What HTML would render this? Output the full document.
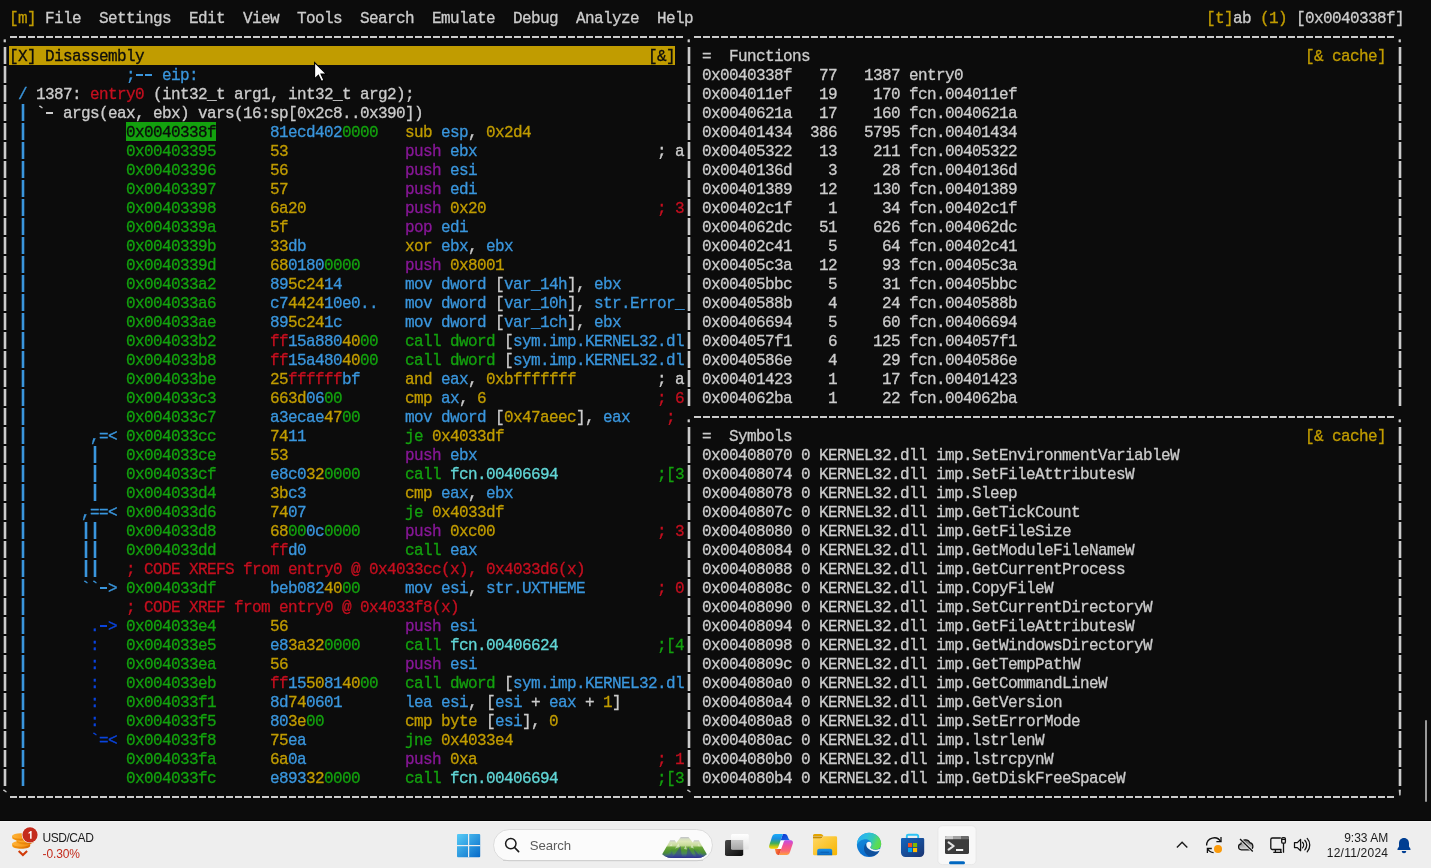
<!DOCTYPE html>
<html><head><meta charset="utf-8"><title>radare2</title>
<style>
html,body{margin:0;padding:0}
body{width:1431px;height:868px;overflow:hidden;background:#0C0C0C;position:relative;font-family:"Liberation Sans",sans-serif}
#term{will-change:transform;position:absolute;left:0;top:0;width:1431px;height:821px;background:#0C0C0C;overflow:hidden}
#term span{-webkit-text-stroke:0.3px;position:absolute;white-space:pre;font-family:"Liberation Mono",monospace;font-size:16px;letter-spacing:-0.6px;line-height:19px;height:19px;transform-origin:0 14px;transform:translateY(1.7px) scaleY(1.03)}
#term i{position:absolute;display:block}
#term i.bg{height:19px}
#term i.v{width:9px;background-image:linear-gradient(to bottom,transparent 1px,currentColor 1px,currentColor 18px,transparent 18px);background-size:2px 19px;background-position:4px 0;background-repeat:repeat-y}
#term i.v::before{content:"";position:absolute;left:3px;top:0;width:4px;height:100%;opacity:.3;background-image:linear-gradient(to bottom,transparent 1px,currentColor 1px,currentColor 18px,transparent 18px);background-size:4px 19px;background-repeat:repeat-y}
#term i.h{height:19px;background-image:linear-gradient(to right,transparent 1.2px,currentColor 1.2px,currentColor 7.9px,transparent 7.9px);background-size:9px 2px;background-position:0 9px;background-repeat:repeat-x}
.cw{color:#CCCCCC}
.cy{color:#C19C00}
.cb{color:#3A96DD}
.cB{color:#0A44DE}
.cg{color:#13A10E}
.cr{color:#C50F1F}
.cm{color:#881798}
.cc{color:#61D6D6}
.ck{color:#0C0C0C}
#bar{position:absolute;left:0;top:821px;width:1431px;height:47px;background:#EEEEEE;border-top:1px solid #F4F4F4;box-sizing:border-box}
.tx{position:absolute;font-family:"Liberation Sans",sans-serif;font-size:12px;line-height:16px;white-space:nowrap}
#tbw{position:absolute;left:0;top:0;width:1431px;height:868px;will-change:transform}
</style></head><body>
<div id="term">
<i class="bg" style="left:9px;top:46px;width:666px;background:#C19C00"></i>
<i class="bg" style="left:126px;top:122px;width:90px;background:#13A10E"></i>
<i class="v" style="left:0px;top:46px;height:741px;color:#CCCCCC"></i>
<i class="v" style="left:18px;top:103px;height:684px;color:#3A96DD"></i>
<i class="v" style="left:81px;top:521px;height:57px;color:#3A96DD"></i>
<i class="v" style="left:90px;top:445px;height:57px;color:#3A96DD"></i>
<i class="v" style="left:90px;top:521px;height:57px;color:#3A96DD"></i>
<i class="v" style="left:684px;top:46px;height:361px;color:#CCCCCC"></i>
<i class="v" style="left:684px;top:426px;height:361px;color:#CCCCCC"></i>
<i class="v" style="left:1395px;top:46px;height:361px;color:#CCCCCC"></i>
<i class="v" style="left:1395px;top:426px;height:361px;color:#CCCCCC"></i>
<i class="h" style="left:9px;top:27px;width:675px;color:#CCCCCC"></i>
<i class="h" style="left:693px;top:27px;width:702px;color:#CCCCCC"></i>
<i class="h" style="left:135px;top:65px;width:18px;color:#3A96DD"></i>
<i class="h" style="left:45px;top:103px;width:9px;color:#CCCCCC"></i>
<i class="h" style="left:693px;top:407px;width:702px;color:#CCCCCC"></i>
<i class="h" style="left:99px;top:578px;width:9px;color:#3A96DD"></i>
<i class="h" style="left:99px;top:616px;width:9px;color:#0A44DE"></i>
<i class="h" style="left:9px;top:787px;width:675px;color:#CCCCCC"></i>
<i class="h" style="left:693px;top:787px;width:702px;color:#CCCCCC"></i>
<span class="cy" style="left:9px;top:8px">[m]</span>
<span class="cw" style="left:45px;top:8px">File  Settings  Edit  View  Tools  Search  Emulate  Debug  Analyze  Help</span>
<span class="cy" style="left:1206px;top:8px">[t]</span>
<span class="cw" style="left:1233px;top:8px">ab</span>
<span class="cy" style="left:1260px;top:8px">(1)</span>
<span class="cw" style="left:1296px;top:8px">[0x0040338f]</span>
<span class="cw" style="left:0px;top:27px">.</span>
<span class="cw" style="left:684px;top:27px">.</span>
<span class="cw" style="left:1395px;top:27px">.</span>
<span class="ck" style="left:9px;top:46px">[X] Disassembly</span>
<span class="ck" style="left:648px;top:46px">[&amp;]</span>
<span class="cw" style="left:702px;top:46px">=  Functions</span>
<span class="cy" style="left:1305px;top:46px">[&amp; cache]</span>
<span class="cb" style="left:126px;top:65px">;</span>
<span class="cb" style="left:162px;top:65px">eip:</span>
<span class="cw" style="left:702px;top:65px">0x0040338f</span>
<span class="cw" style="left:819px;top:65px">77</span>
<span class="cw" style="left:864px;top:65px">1387 entry0</span>
<span class="cb" style="left:18px;top:84px">/</span>
<span class="cw" style="left:36px;top:84px">1387:</span>
<span class="cr" style="left:90px;top:84px">entry0</span>
<span class="cw" style="left:153px;top:84px">(int32_t arg1, int32_t arg2);</span>
<span class="cw" style="left:702px;top:84px">0x004011ef</span>
<span class="cw" style="left:819px;top:84px">19</span>
<span class="cw" style="left:873px;top:84px">170 fcn.004011ef</span>
<span class="cw" style="left:36px;top:103px">`  args(eax, ebx) vars(16:sp[0x2c8..0x390])</span>
<span class="cw" style="left:702px;top:103px">0x0040621a</span>
<span class="cw" style="left:819px;top:103px">17</span>
<span class="cw" style="left:873px;top:103px">160 fcn.0040621a</span>
<span class="ck" style="left:126px;top:122px">0x0040338f</span>
<span class="cb" style="left:270px;top:122px">81ecd402</span>
<span class="cg" style="left:342px;top:122px">0000</span>
<span class="cy" style="left:405px;top:122px">sub</span>
<span class="cb" style="left:441px;top:122px">esp</span>
<span class="cw" style="left:468px;top:122px">,</span>
<span class="cy" style="left:486px;top:122px">0x2d4</span>
<span class="cw" style="left:702px;top:122px">0x00401434  386</span>
<span class="cw" style="left:864px;top:122px">5795 fcn.00401434</span>
<span class="cg" style="left:126px;top:141px">0x00403395</span>
<span class="cy" style="left:270px;top:141px">53</span>
<span class="cm" style="left:405px;top:141px">push</span>
<span class="cb" style="left:450px;top:141px">ebx</span>
<span class="cw" style="left:657px;top:141px">; a  0x00405322</span>
<span class="cw" style="left:819px;top:141px">13</span>
<span class="cw" style="left:873px;top:141px">211 fcn.00405322</span>
<span class="cg" style="left:126px;top:160px">0x00403396</span>
<span class="cy" style="left:270px;top:160px">56</span>
<span class="cm" style="left:405px;top:160px">push</span>
<span class="cb" style="left:450px;top:160px">esi</span>
<span class="cw" style="left:702px;top:160px">0x0040136d</span>
<span class="cw" style="left:828px;top:160px">3</span>
<span class="cw" style="left:882px;top:160px">28 fcn.0040136d</span>
<span class="cg" style="left:126px;top:179px">0x00403397</span>
<span class="cy" style="left:270px;top:179px">57</span>
<span class="cm" style="left:405px;top:179px">push</span>
<span class="cb" style="left:450px;top:179px">edi</span>
<span class="cw" style="left:702px;top:179px">0x00401389</span>
<span class="cw" style="left:819px;top:179px">12</span>
<span class="cw" style="left:873px;top:179px">130 fcn.00401389</span>
<span class="cg" style="left:126px;top:198px">0x00403398</span>
<span class="cy" style="left:270px;top:198px">6a20</span>
<span class="cm" style="left:405px;top:198px">push</span>
<span class="cy" style="left:450px;top:198px">0x20</span>
<span class="cr" style="left:657px;top:198px">; 3</span>
<span class="cw" style="left:702px;top:198px">0x00402c1f</span>
<span class="cw" style="left:828px;top:198px">1</span>
<span class="cw" style="left:882px;top:198px">34 fcn.00402c1f</span>
<span class="cg" style="left:126px;top:217px">0x0040339a</span>
<span class="cy" style="left:270px;top:217px">5f</span>
<span class="cm" style="left:405px;top:217px">pop</span>
<span class="cb" style="left:441px;top:217px">edi</span>
<span class="cw" style="left:702px;top:217px">0x004062dc</span>
<span class="cw" style="left:819px;top:217px">51</span>
<span class="cw" style="left:873px;top:217px">626 fcn.004062dc</span>
<span class="cg" style="left:126px;top:236px">0x0040339b</span>
<span class="cy" style="left:270px;top:236px">33</span>
<span class="cb" style="left:288px;top:236px">db</span>
<span class="cy" style="left:405px;top:236px">xor</span>
<span class="cb" style="left:441px;top:236px">ebx</span>
<span class="cw" style="left:468px;top:236px">,</span>
<span class="cb" style="left:486px;top:236px">ebx</span>
<span class="cw" style="left:702px;top:236px">0x00402c41</span>
<span class="cw" style="left:828px;top:236px">5</span>
<span class="cw" style="left:882px;top:236px">64 fcn.00402c41</span>
<span class="cg" style="left:126px;top:255px">0x0040339d</span>
<span class="cy" style="left:270px;top:255px">68</span>
<span class="cb" style="left:288px;top:255px">0180</span>
<span class="cg" style="left:324px;top:255px">0000</span>
<span class="cm" style="left:405px;top:255px">push</span>
<span class="cy" style="left:450px;top:255px">0x8001</span>
<span class="cw" style="left:702px;top:255px">0x00405c3a</span>
<span class="cw" style="left:819px;top:255px">12</span>
<span class="cw" style="left:882px;top:255px">93 fcn.00405c3a</span>
<span class="cg" style="left:126px;top:274px">0x004033a2</span>
<span class="cb" style="left:270px;top:274px">89</span>
<span class="cy" style="left:288px;top:274px">5c24</span>
<span class="cb" style="left:324px;top:274px">14</span>
<span class="cb" style="left:405px;top:274px">mov dword</span>
<span class="cw" style="left:495px;top:274px">[</span>
<span class="cb" style="left:504px;top:274px">var_14h</span>
<span class="cw" style="left:567px;top:274px">],</span>
<span class="cb" style="left:594px;top:274px">ebx</span>
<span class="cw" style="left:702px;top:274px">0x00405bbc</span>
<span class="cw" style="left:828px;top:274px">5</span>
<span class="cw" style="left:882px;top:274px">31 fcn.00405bbc</span>
<span class="cg" style="left:126px;top:293px">0x004033a6</span>
<span class="cb" style="left:270px;top:293px">c7</span>
<span class="cy" style="left:288px;top:293px">4424</span>
<span class="cb" style="left:324px;top:293px">10e0..</span>
<span class="cb" style="left:405px;top:293px">mov dword</span>
<span class="cw" style="left:495px;top:293px">[</span>
<span class="cb" style="left:504px;top:293px">var_10h</span>
<span class="cw" style="left:567px;top:293px">],</span>
<span class="cb" style="left:594px;top:293px">str.Error_</span>
<span class="cw" style="left:702px;top:293px">0x0040588b</span>
<span class="cw" style="left:828px;top:293px">4</span>
<span class="cw" style="left:882px;top:293px">24 fcn.0040588b</span>
<span class="cg" style="left:126px;top:312px">0x004033ae</span>
<span class="cb" style="left:270px;top:312px">89</span>
<span class="cy" style="left:288px;top:312px">5c24</span>
<span class="cb" style="left:324px;top:312px">1c</span>
<span class="cb" style="left:405px;top:312px">mov dword</span>
<span class="cw" style="left:495px;top:312px">[</span>
<span class="cb" style="left:504px;top:312px">var_1ch</span>
<span class="cw" style="left:567px;top:312px">],</span>
<span class="cb" style="left:594px;top:312px">ebx</span>
<span class="cw" style="left:702px;top:312px">0x00406694</span>
<span class="cw" style="left:828px;top:312px">5</span>
<span class="cw" style="left:882px;top:312px">60 fcn.00406694</span>
<span class="cg" style="left:126px;top:331px">0x004033b2</span>
<span class="cr" style="left:270px;top:331px">ff</span>
<span class="cb" style="left:288px;top:331px">15a880</span>
<span class="cy" style="left:342px;top:331px">40</span>
<span class="cg" style="left:360px;top:331px">00</span>
<span class="cg" style="left:405px;top:331px">call dword</span>
<span class="cw" style="left:504px;top:331px">[</span>
<span class="cb" style="left:513px;top:331px">sym.imp.KERNEL32.dl</span>
<span class="cw" style="left:702px;top:331px">0x004057f1</span>
<span class="cw" style="left:828px;top:331px">6</span>
<span class="cw" style="left:873px;top:331px">125 fcn.004057f1</span>
<span class="cg" style="left:126px;top:350px">0x004033b8</span>
<span class="cr" style="left:270px;top:350px">ff</span>
<span class="cb" style="left:288px;top:350px">15a480</span>
<span class="cy" style="left:342px;top:350px">40</span>
<span class="cg" style="left:360px;top:350px">00</span>
<span class="cg" style="left:405px;top:350px">call dword</span>
<span class="cw" style="left:504px;top:350px">[</span>
<span class="cb" style="left:513px;top:350px">sym.imp.KERNEL32.dl</span>
<span class="cw" style="left:702px;top:350px">0x0040586e</span>
<span class="cw" style="left:828px;top:350px">4</span>
<span class="cw" style="left:882px;top:350px">29 fcn.0040586e</span>
<span class="cg" style="left:126px;top:369px">0x004033be</span>
<span class="cy" style="left:270px;top:369px">25</span>
<span class="cr" style="left:288px;top:369px">ffffff</span>
<span class="cb" style="left:342px;top:369px">bf</span>
<span class="cy" style="left:405px;top:369px">and</span>
<span class="cb" style="left:441px;top:369px">eax</span>
<span class="cw" style="left:468px;top:369px">,</span>
<span class="cy" style="left:486px;top:369px">0xbfffffff</span>
<span class="cw" style="left:657px;top:369px">; a  0x00401423</span>
<span class="cw" style="left:828px;top:369px">1</span>
<span class="cw" style="left:882px;top:369px">17 fcn.00401423</span>
<span class="cg" style="left:126px;top:388px">0x004033c3</span>
<span class="cy" style="left:270px;top:388px">663d</span>
<span class="cb" style="left:306px;top:388px">06</span>
<span class="cg" style="left:324px;top:388px">00</span>
<span class="cy" style="left:405px;top:388px">cmp</span>
<span class="cb" style="left:441px;top:388px">ax</span>
<span class="cw" style="left:459px;top:388px">,</span>
<span class="cy" style="left:477px;top:388px">6</span>
<span class="cr" style="left:657px;top:388px">; 6</span>
<span class="cw" style="left:702px;top:388px">0x004062ba</span>
<span class="cw" style="left:828px;top:388px">1</span>
<span class="cw" style="left:882px;top:388px">22 fcn.004062ba</span>
<span class="cg" style="left:126px;top:407px">0x004033c7</span>
<span class="cb" style="left:270px;top:407px">a3ecae</span>
<span class="cy" style="left:324px;top:407px">47</span>
<span class="cg" style="left:342px;top:407px">00</span>
<span class="cb" style="left:405px;top:407px">mov dword</span>
<span class="cw" style="left:495px;top:407px">[</span>
<span class="cy" style="left:504px;top:407px">0x47aeec</span>
<span class="cw" style="left:576px;top:407px">],</span>
<span class="cb" style="left:603px;top:407px">eax</span>
<span class="cr" style="left:666px;top:407px">;</span>
<span class="cw" style="left:684px;top:407px">.</span>
<span class="cw" style="left:1395px;top:407px">.</span>
<span class="cb" style="left:90px;top:426px">,=&lt;</span>
<span class="cg" style="left:126px;top:426px">0x004033cc</span>
<span class="cy" style="left:270px;top:426px">74</span>
<span class="cb" style="left:288px;top:426px">11</span>
<span class="cg" style="left:405px;top:426px">je</span>
<span class="cy" style="left:432px;top:426px">0x4033df</span>
<span class="cw" style="left:702px;top:426px">=  Symbols</span>
<span class="cy" style="left:1305px;top:426px">[&amp; cache]</span>
<span class="cg" style="left:126px;top:445px">0x004033ce</span>
<span class="cy" style="left:270px;top:445px">53</span>
<span class="cm" style="left:405px;top:445px">push</span>
<span class="cb" style="left:450px;top:445px">ebx</span>
<span class="cw" style="left:702px;top:445px">0x00408070 0 KERNEL32.dll imp.SetEnvironmentVariableW</span>
<span class="cg" style="left:126px;top:464px">0x004033cf</span>
<span class="cb" style="left:270px;top:464px">e8c0</span>
<span class="cy" style="left:306px;top:464px">32</span>
<span class="cg" style="left:324px;top:464px">0000</span>
<span class="cg" style="left:405px;top:464px">call</span>
<span class="cc" style="left:450px;top:464px">fcn.00406694</span>
<span class="cg" style="left:657px;top:464px">;[3</span>
<span class="cw" style="left:702px;top:464px">0x00408074 0 KERNEL32.dll imp.SetFileAttributesW</span>
<span class="cg" style="left:126px;top:483px">0x004033d4</span>
<span class="cy" style="left:270px;top:483px">3b</span>
<span class="cb" style="left:288px;top:483px">c3</span>
<span class="cy" style="left:405px;top:483px">cmp</span>
<span class="cb" style="left:441px;top:483px">eax</span>
<span class="cw" style="left:468px;top:483px">,</span>
<span class="cb" style="left:486px;top:483px">ebx</span>
<span class="cw" style="left:702px;top:483px">0x00408078 0 KERNEL32.dll imp.Sleep</span>
<span class="cb" style="left:81px;top:502px">,==&lt;</span>
<span class="cg" style="left:126px;top:502px">0x004033d6</span>
<span class="cy" style="left:270px;top:502px">74</span>
<span class="cb" style="left:288px;top:502px">07</span>
<span class="cg" style="left:405px;top:502px">je</span>
<span class="cy" style="left:432px;top:502px">0x4033df</span>
<span class="cw" style="left:702px;top:502px">0x0040807c 0 KERNEL32.dll imp.GetTickCount</span>
<span class="cg" style="left:126px;top:521px">0x004033d8</span>
<span class="cy" style="left:270px;top:521px">68</span>
<span class="cg" style="left:288px;top:521px">00</span>
<span class="cb" style="left:306px;top:521px">0c</span>
<span class="cg" style="left:324px;top:521px">0000</span>
<span class="cm" style="left:405px;top:521px">push</span>
<span class="cy" style="left:450px;top:521px">0xc00</span>
<span class="cr" style="left:657px;top:521px">; 3</span>
<span class="cw" style="left:702px;top:521px">0x00408080 0 KERNEL32.dll imp.GetFileSize</span>
<span class="cg" style="left:126px;top:540px">0x004033dd</span>
<span class="cr" style="left:270px;top:540px">ff</span>
<span class="cb" style="left:288px;top:540px">d0</span>
<span class="cg" style="left:405px;top:540px">call</span>
<span class="cb" style="left:450px;top:540px">eax</span>
<span class="cw" style="left:702px;top:540px">0x00408084 0 KERNEL32.dll imp.GetModuleFileNameW</span>
<span class="cr" style="left:126px;top:559px">; CODE XREFS from entry0 @ 0x4033cc(x), 0x4033d6(x)</span>
<span class="cw" style="left:702px;top:559px">0x00408088 0 KERNEL32.dll imp.GetCurrentProcess</span>
<span class="cb" style="left:81px;top:578px">`` &gt;</span>
<span class="cg" style="left:126px;top:578px">0x004033df</span>
<span class="cb" style="left:270px;top:578px">beb082</span>
<span class="cy" style="left:324px;top:578px">40</span>
<span class="cg" style="left:342px;top:578px">00</span>
<span class="cb" style="left:405px;top:578px">mov esi</span>
<span class="cw" style="left:468px;top:578px">,</span>
<span class="cb" style="left:486px;top:578px">str.UXTHEME</span>
<span class="cr" style="left:657px;top:578px">; 0</span>
<span class="cw" style="left:702px;top:578px">0x0040808c 0 KERNEL32.dll imp.CopyFileW</span>
<span class="cr" style="left:126px;top:597px">; CODE XREF from entry0 @ 0x4033f8(x)</span>
<span class="cw" style="left:702px;top:597px">0x00408090 0 KERNEL32.dll imp.SetCurrentDirectoryW</span>
<span class="cB" style="left:90px;top:616px">. &gt;</span>
<span class="cg" style="left:126px;top:616px">0x004033e4</span>
<span class="cy" style="left:270px;top:616px">56</span>
<span class="cm" style="left:405px;top:616px">push</span>
<span class="cb" style="left:450px;top:616px">esi</span>
<span class="cw" style="left:702px;top:616px">0x00408094 0 KERNEL32.dll imp.GetFileAttributesW</span>
<span class="cB" style="left:90px;top:635px">:</span>
<span class="cg" style="left:126px;top:635px">0x004033e5</span>
<span class="cb" style="left:270px;top:635px">e8</span>
<span class="cy" style="left:288px;top:635px">3a32</span>
<span class="cg" style="left:324px;top:635px">0000</span>
<span class="cg" style="left:405px;top:635px">call</span>
<span class="cc" style="left:450px;top:635px">fcn.00406624</span>
<span class="cg" style="left:657px;top:635px">;[4</span>
<span class="cw" style="left:702px;top:635px">0x00408098 0 KERNEL32.dll imp.GetWindowsDirectoryW</span>
<span class="cB" style="left:90px;top:654px">:</span>
<span class="cg" style="left:126px;top:654px">0x004033ea</span>
<span class="cy" style="left:270px;top:654px">56</span>
<span class="cm" style="left:405px;top:654px">push</span>
<span class="cb" style="left:450px;top:654px">esi</span>
<span class="cw" style="left:702px;top:654px">0x0040809c 0 KERNEL32.dll imp.GetTempPathW</span>
<span class="cB" style="left:90px;top:673px">:</span>
<span class="cg" style="left:126px;top:673px">0x004033eb</span>
<span class="cr" style="left:270px;top:673px">ff</span>
<span class="cb" style="left:288px;top:673px">15</span>
<span class="cy" style="left:306px;top:673px">50</span>
<span class="cb" style="left:324px;top:673px">81</span>
<span class="cy" style="left:342px;top:673px">40</span>
<span class="cg" style="left:360px;top:673px">00</span>
<span class="cg" style="left:405px;top:673px">call dword</span>
<span class="cw" style="left:504px;top:673px">[</span>
<span class="cb" style="left:513px;top:673px">sym.imp.KERNEL32.dl</span>
<span class="cw" style="left:702px;top:673px">0x004080a0 0 KERNEL32.dll imp.GetCommandLineW</span>
<span class="cB" style="left:90px;top:692px">:</span>
<span class="cg" style="left:126px;top:692px">0x004033f1</span>
<span class="cb" style="left:270px;top:692px">8d</span>
<span class="cy" style="left:288px;top:692px">74</span>
<span class="cb" style="left:306px;top:692px">0601</span>
<span class="cb" style="left:405px;top:692px">lea esi</span>
<span class="cw" style="left:468px;top:692px">, [</span>
<span class="cb" style="left:495px;top:692px">esi</span>
<span class="cw" style="left:531px;top:692px">+</span>
<span class="cb" style="left:549px;top:692px">eax</span>
<span class="cw" style="left:585px;top:692px">+</span>
<span class="cy" style="left:603px;top:692px">1</span>
<span class="cw" style="left:612px;top:692px">]</span>
<span class="cw" style="left:702px;top:692px">0x004080a4 0 KERNEL32.dll imp.GetVersion</span>
<span class="cB" style="left:90px;top:711px">:</span>
<span class="cg" style="left:126px;top:711px">0x004033f5</span>
<span class="cb" style="left:270px;top:711px">80</span>
<span class="cy" style="left:288px;top:711px">3e</span>
<span class="cg" style="left:306px;top:711px">00</span>
<span class="cy" style="left:405px;top:711px">cmp byte</span>
<span class="cw" style="left:486px;top:711px">[</span>
<span class="cb" style="left:495px;top:711px">esi</span>
<span class="cw" style="left:522px;top:711px">],</span>
<span class="cy" style="left:549px;top:711px">0</span>
<span class="cw" style="left:702px;top:711px">0x004080a8 0 KERNEL32.dll imp.SetErrorMode</span>
<span class="cB" style="left:90px;top:730px">`=&lt;</span>
<span class="cg" style="left:126px;top:730px">0x004033f8</span>
<span class="cy" style="left:270px;top:730px">75</span>
<span class="cb" style="left:288px;top:730px">ea</span>
<span class="cg" style="left:405px;top:730px">jne</span>
<span class="cy" style="left:441px;top:730px">0x4033e4</span>
<span class="cw" style="left:702px;top:730px">0x004080ac 0 KERNEL32.dll imp.lstrlenW</span>
<span class="cg" style="left:126px;top:749px">0x004033fa</span>
<span class="cy" style="left:270px;top:749px">6a</span>
<span class="cb" style="left:288px;top:749px">0a</span>
<span class="cm" style="left:405px;top:749px">push</span>
<span class="cy" style="left:450px;top:749px">0xa</span>
<span class="cr" style="left:657px;top:749px">; 1</span>
<span class="cw" style="left:702px;top:749px">0x004080b0 0 KERNEL32.dll imp.lstrcpynW</span>
<span class="cg" style="left:126px;top:768px">0x004033fc</span>
<span class="cb" style="left:270px;top:768px">e893</span>
<span class="cy" style="left:306px;top:768px">32</span>
<span class="cg" style="left:324px;top:768px">0000</span>
<span class="cg" style="left:405px;top:768px">call</span>
<span class="cc" style="left:450px;top:768px">fcn.00406694</span>
<span class="cg" style="left:657px;top:768px">;[3</span>
<span class="cw" style="left:702px;top:768px">0x004080b4 0 KERNEL32.dll imp.GetDiskFreeSpaceW</span>
<span class="cw" style="left:0px;top:787px">`</span>
<span class="cw" style="left:684px;top:787px">`</span>
<span class="cw" style="left:1395px;top:787px">&#x27;</span>
</div>
<svg style="position:absolute;left:310px;top:58px" width="20" height="26" viewBox="310 58 20 26"><path d="M314.600 62.600v16.200l3.800-3.600l3 6.200l2.500-1.200l-2.900-6.100h5.500z" fill="#fff" stroke="#000" stroke-width="1.100" stroke-linejoin="miter"/></svg>
<div style="position:absolute;left:1425px;top:720px;width:2px;height:82px;border-radius:1px;background:#9A9A9A"></div>
<div style="position:absolute;left:0;top:820px;width:1431px;height:1px;background:#000"></div>
<div id="bar"></div>
<div id="tbw"><svg id="tb" width="1431" height="47" viewBox="0 821 1431 47" style="position:absolute;left:0;top:821px">
<defs>
<linearGradient id="gCoinT" x1="0" y1="0" x2="1" y2="0"><stop offset="0" stop-color="#FFB53A"/><stop offset="1" stop-color="#F28A0A"/></linearGradient>
<linearGradient id="gCoinS" x1="0" y1="0" x2="1" y2="0"><stop offset="0" stop-color="#F59A12"/><stop offset="1" stop-color="#D86A00"/></linearGradient>
<linearGradient id="gWin" x1="0" y1="0" x2="1" y2="1"><stop offset="0" stop-color="#57CCF7"/><stop offset="1" stop-color="#0669C8"/></linearGradient>
<linearGradient id="gMt" x1="0" y1="837" x2="0" y2="858" gradientUnits="userSpaceOnUse"><stop offset="0" stop-color="#BEC0C8"/><stop offset=".1" stop-color="#D6DEC0"/><stop offset=".22" stop-color="#DDE8B6"/><stop offset=".4" stop-color="#C6DA98"/><stop offset=".5" stop-color="#6CA83C"/><stop offset=".62" stop-color="#4E9430"/><stop offset=".78" stop-color="#4A8858"/><stop offset=".9" stop-color="#3E5490"/><stop offset="1" stop-color="#2C2C84"/></linearGradient>
<linearGradient id="gMt2" x1="0" y1="840" x2="0" y2="858" gradientUnits="userSpaceOnUse"><stop offset="0" stop-color="#C2C4C8"/><stop offset=".12" stop-color="#D8E2BC"/><stop offset=".3" stop-color="#C8DC9C"/><stop offset=".42" stop-color="#66A436"/><stop offset=".7" stop-color="#4C8E34"/><stop offset=".88" stop-color="#41667C"/><stop offset="1" stop-color="#343C8C"/></linearGradient>
<clipPath id="cMt"><path d="M660 835h49v16.500q-3.500 6.400-12 6.400h-25q-8.500 0-12-6.400z"/></clipPath>
<linearGradient id="gTvB" x1="0" y1="0" x2="1" y2="1"><stop offset="0" stop-color="#4A4A4A"/><stop offset="1" stop-color="#0A0A0A"/></linearGradient>
<linearGradient id="gTvW" x1="0" y1="0" x2="0" y2="1"><stop offset="0" stop-color="#FFFFFF"/><stop offset="1" stop-color="#E4E4E4"/></linearGradient>
<linearGradient id="gTvG" x1="0" y1="0" x2="0" y2="1"><stop offset="0" stop-color="#CACACA"/><stop offset="1" stop-color="#A8A8A8"/></linearGradient>
<linearGradient id="gCpL" x1="0" y1="834" x2="0" y2="850" gradientUnits="userSpaceOnUse"><stop offset="0" stop-color="#1AACFA"/><stop offset=".3" stop-color="#1A8EE0"/><stop offset=".58" stop-color="#3FAE5A"/><stop offset=".8" stop-color="#CFCB10"/><stop offset=".92" stop-color="#F8D400"/><stop offset="1" stop-color="#F8C400"/></linearGradient>
<linearGradient id="gCpR" x1="0" y1="839" x2="0" y2="855" gradientUnits="userSpaceOnUse"><stop offset="0" stop-color="#B44CFA"/><stop offset=".4" stop-color="#F0509A"/><stop offset=".75" stop-color="#FA6A70"/><stop offset="1" stop-color="#FFA040"/></linearGradient>
<linearGradient id="gCpF1" x1="0" y1="0" x2="1" y2="1"><stop offset="0" stop-color="#0C34D0"/><stop offset="1" stop-color="#1C6CE8"/></linearGradient>
<linearGradient id="gCpF2" x1="0" y1="0" x2="1" y2="0.4"><stop offset="0" stop-color="#FF8A3C"/><stop offset="1" stop-color="#E23C28"/></linearGradient>
<linearGradient id="gFo" x1="0" y1="0" x2="1" y2="1"><stop offset="0" stop-color="#FFD866"/><stop offset="1" stop-color="#F7B500"/></linearGradient>
<linearGradient id="gFb" x1="0" y1="0" x2="0" y2="1"><stop offset="0" stop-color="#1890E8"/><stop offset="1" stop-color="#0A68C0"/></linearGradient>
<linearGradient id="gEd1" x1="0" y1="0.2" x2="1" y2="0.55"><stop offset="0" stop-color="#2AACF2"/><stop offset=".35" stop-color="#2BBDE0"/><stop offset=".62" stop-color="#34C8B4"/><stop offset=".85" stop-color="#58DA60"/><stop offset="1" stop-color="#5CDC48"/></linearGradient>
<linearGradient id="gEd2" x1="0" y1="0" x2="0.3" y2="1"><stop offset="0" stop-color="#1B92E0"/><stop offset=".5" stop-color="#1080D6"/><stop offset="1" stop-color="#0A6ACC"/></linearGradient>
<linearGradient id="gSt" x1="0" y1="0" x2="1" y2="1"><stop offset="0" stop-color="#1466C0"/><stop offset="1" stop-color="#1B3470"/></linearGradient>
<linearGradient id="gCl" x1="0" y1="0" x2="0" y2="1"><stop offset="0" stop-color="#6A6A6A"/><stop offset="1" stop-color="#E0E0E0"/></linearGradient>
</defs>

<!-- widget: coins -->
<g>
 <path d="M12.2 843.6v2.2c0 1.7 4 3 9 3s9-1.3 9-3v-2.2z" fill="url(#gCoinS)"/>
 <ellipse cx="21.2" cy="843.8" rx="9" ry="2.9" fill="url(#gCoinT)"/>
 <path d="M16.5 839.6v2c0 1.6 3.9 2.9 8.7 2.9s8.7-1.3 8.7-2.9v-2z" fill="url(#gCoinS)"/>
 <ellipse cx="25.2" cy="839.8" rx="8.7" ry="2.8" fill="url(#gCoinT)"/>
 <path d="M12.2 835.8v2c0 1.6 3.9 2.9 8.7 2.9s8.7-1.3 8.7-2.9v-2z" fill="url(#gCoinS)"/>
 <ellipse cx="20.9" cy="836" rx="8.7" ry="2.8" fill="url(#gCoinT)"/>
 <path d="M18.7 851l4.2 4 4.2-4" fill="none" stroke="#D13A08" stroke-width="2.1"/>
 <circle cx="30" cy="834.8" r="8.300" fill="#F6F6F6"/><circle cx="30" cy="834.8" r="7.600" fill="#C42B1C"/>
 <path d="M28.6 832.6l2.1-1.6h0.9v7.7h-1.5v-5.6l-1.5 1z" fill="#fff"/>
</g>

<!-- windows logo -->
<g fill="url(#gWin)">
 <rect x="457" y="834" width="23.2" height="23.2" rx="1" />
</g>
<rect x="468" y="834" width="1.2" height="23.2" fill="#EEEEEE"/>
<rect x="457" y="845" width="23.2" height="1.2" fill="#EEEEEE"/>

<!-- search pill -->
<rect x="493.5" y="829.5" width="219" height="31.4" rx="15.7" fill="#FBFBFB" stroke="#DBDBDB" stroke-width="1"/>
<path d="M503 860.5h200" stroke="#C6C6C6" stroke-width="1" fill="none" opacity=".7"/>
<circle cx="510.800" cy="843.600" r="5.200" fill="none" stroke="#1B1B1B" stroke-width="1.5"/>
<path d="M514.600 847.500l4 4.100" stroke="#1B1B1B" stroke-width="1.7" stroke-linecap="round"/>
<!-- mountains -->
<g clip-path="url(#cMt)">
 <path d="M660 858l10.200-17.800h4.600l4.500 7l-5.500 10.800z" fill="url(#gMt2)"/>
 <path d="M709 858l-10.200-17.800h-4.600l-4.500 7l5.500 10.800z" fill="url(#gMt2)"/>
 <path d="M664.500 858l16.300-21h7.700l16.300 21z" fill="url(#gMt)"/>
 <path d="M672.500 858l8-12l1.500 12zM686 858l2-11l6.500 11zM697 858l-3.500-9l8.500 9z" fill="#34389A" opacity=".5"/>
 <path d="M668 858l4-7l1.500 7zM701 858l-2-6l5.500 6z" fill="#3A4A9A" opacity=".45"/>
 <path d="M675 848.500l3.500-5l1.300 3.500zM684 849l1.700-3.500l1.300 4zM690.500 847.500l1.500-3l2 4z" fill="#F2F5E6" opacity=".6"/>
 <path d="M669.500 846l2-2.500l.8 2.500zM697.500 846l1.200-2.500l1.500 3z" fill="#F2F5E6" opacity=".5"/>
</g>

<!-- task view -->
<rect x="725" y="840" width="18.200" height="16" rx="1.800" fill="url(#gTvB)"/>
<rect x="731" y="834" width="17.800" height="15.400" rx="1.500" fill="url(#gTvW)"/>
<path d="M731 840h12.200v9.400h-10.700a1.500 1.500 0 0 1-1.500-1.500z" fill="url(#gTvG)"/>

<!-- copilot -->
<g>
 <path d="M780.700 839.900h3.800l-3.200 8.900h-3.800z" fill="#FFFFFF"/>
 <path d="M782.900 834H785C786.300 834 787 834.700 787.500 836L788.500 838.600C788.800 839.400 789.400 840.200 790.600 840.200H780.700Z" fill="url(#gCpF1)"/>
 <path d="M774.900 848.900H781.400L779.200 854.900H778.600C777.300 854.900 776.400 854.200 775.900 852.900Z" fill="url(#gCpF2)"/>
 <path d="M775.400 834H782.900L778.300 847C777.900 848.100 777.200 848.700 776 848.700H771.400C769.600 848.700 768.600 847.400 769.200 845.500L771.900 837.200C772.600 835.100 773.700 834 775.400 834Z" fill="url(#gCpL)"/>
 <path d="M786.600 854.900H779.100L783.700 841.900C784.100 840.800 784.800 840.200 786 840.200H790.600C792.400 840.200 793.400 841.500 792.800 843.400L790.100 851.700C789.400 853.800 788.300 854.900 786.600 854.900Z" fill="url(#gCpR)"/>
</g>

<!-- folder -->
<path d="M813 835.500a1.500 1.500 0 0 1 1.500-1.500h6.300c.6 0 1 .2 1.400.6l1.500 1.700h-10.700z" fill="#E3A400"/>
<path d="M813 836.400h10.200l-1.600 1.800c-.3.300-.7.500-1.200.5h-7.400z" fill="#C88C00"/>
<path d="M813 838.600h7.600c.5 0 .9-.2 1.200-.5l1.300-1.400c.3-.3.600-.4 1-.4h11.700a1.300 1.300 0 0 1 1.300 1.300v16.300a1.300 1.300 0 0 1-1.300 1.300h-21.500a1.300 1.300 0 0 1-1.300-1.300z" fill="url(#gFo)"/>
<path d="M817.200 855.200v-4.400a2 2 0 0 1 2-2h11a2 2 0 0 1 2 2v4.400z" fill="url(#gFb)"/>
<rect x="820.300" y="851.700" width="8.800" height="1" rx=".5" fill="#0A5CB0"/>

<!-- edge -->
<g>
 <circle cx="869.050" cy="844.850" r="12.150" fill="url(#gEd2)"/>
 <path d="M866 843.500C863.400 846 863.200 851.200 866.500 854.400C869.600 857.400 875.800 857.200 879.500 850.800C876.200 851.900 871.800 851.500 868.900 849C866.500 847.700 865.800 845.500 866 843.500Z" fill="#0F509C"/>
 <path d="M866.400 844.600C866.400 842.800 867.600 841.800 869 841.800C870.600 841.800 871.700 843 871.700 844.600C871.700 846 870.300 846.600 870.400 847.400C870.600 848.600 873.500 849.700 876 849.700C877.800 849.700 879.200 849.200 880.200 848.500L879.500 850.800C876.200 851.900 871.800 851.500 868.900 849C866.900 848 866.400 846.200 866.400 844.600Z" fill="#F3F5F7"/>
  <path d="M882.400 844.500L880.300 852.400L879.300 850.900L880.300 848.600L880.800 844.500Z" fill="#EEEEEE"/>
 <path d="M856.950 843.200C857.800 837 862.900 832.700 869.050 832.700C876 832.700 881.200 838 881.200 843.700C881.200 847.500 878.800 849.500 875.600 849.500C873 849.300 870.900 848.500 870.500 847.400C870.300 846.700 871.700 846 871.700 844.400C871.700 842 869.300 839.300 865.500 839.300C861.800 839.300 858.500 841.400 856.950 844.800Z" fill="url(#gEd1)"/>
</g>

<!-- store -->
<path d="M906.800 839.500v-3.200a1.500 1.500 0 0 1 1.500-1.500h8.400a1.500 1.500 0 0 1 1.500 1.500v3.200" fill="none" stroke="#2EC4F6" stroke-width="1.900"/>
<path d="M901 839.200a1.200 1.200 0 0 1 1.200-1.200h20.800a1.200 1.200 0 0 1 1.200 1.200v13.400a4.400 4.400 0 0 1-4.400 4.400h-14.400a4.400 4.400 0 0 1-4.400-4.400z" fill="url(#gSt)"/>
<rect x="908" y="843" width="4.100" height="4.100" fill="#F25022"/><rect x="913" y="843" width="4.100" height="4.100" fill="#7FBA00"/>
<rect x="908" y="848" width="4.100" height="4.100" fill="#00A4EF"/><rect x="913" y="848" width="4.100" height="4.100" fill="#FFB900"/>

<!-- terminal (active) -->
<rect x="937.900" y="825.700" width="38.200" height="38.900" rx="4.500" fill="#F8F8F8" stroke="#E4E4E4" stroke-width=".8"/>
<rect x="945" y="836" width="24" height="18" rx="1.600" fill="#3B3B3B"/>
<path d="M945 837.600a1.600 1.600 0 0 1 1.600-1.600h6.400v3.200h-8z" fill="#CDCDCD"/>
<rect x="953" y="836" width="8" height="3.200" fill="#A2A2A2"/>
<path d="M961 836h6.400a1.600 1.600 0 0 1 1.600 1.600v1.600h-8z" fill="#6C6C6C"/>
<path d="M948.600 842.300l5.100 3.700l-5.100 3.700" fill="none" stroke="#E2E2E2" stroke-width="2.100" stroke-linecap="round" stroke-linejoin="round"/>
<rect x="956" y="849" width="7.200" height="2" fill="#F4F4F4"/>
<rect x="949" y="861.200" width="16" height="3" rx="1.500" fill="#0067C0"/>

<!-- tray chevron -->
<path d="M1176.900 847.500l5.200-5.300l5.200 5.300" fill="none" stroke="#1B1B1B" stroke-width="1.400"/>
<!-- sync -->
<g fill="none" stroke="#111" stroke-width="1.300">
 <path d="M1206.600 845.500a7.600 7.600 0 0 1 14.200-3.800"/>
 <path d="M1216.400 841.700h4.600v-4.700"/>
 <path d="M1207.600 848.800c1.300 2.300 3.400 3.600 6 3.800"/>
 <path d="M1211.800 848.500h-4.400v4.600"/>
</g>
<circle cx="1218" cy="849" r="4" fill="#FA9A0A"/>
<!-- cloud off -->
<path d="M1241.400 849.900a3.100 3.100 0 0 1-.5-6.100a4.700 4.700 0 0 1 8.900-1.200a3.800 3.800 0 0 1 .6 7.300z" fill="url(#gCl)" stroke="#111" stroke-width="1.200"/>
<path d="M1240 839l12.800 12.500" stroke="#EEEEEE" stroke-width="3"/>
<path d="M1240 839l12.800 12.500" stroke="#111" stroke-width="1.300"/>
<!-- network -->
<g fill="none" stroke="#111" stroke-width="1.300">
 <path d="M1280.800 838h-8.400a1.600 1.600 0 0 0-1.600 1.600v8.300a1.600 1.600 0 0 0 1.600 1.600h9"/>
 <path d="M1275.400 849.500v2.900M1280.800 849.500v2.900M1273.300 852.400h8.600"/>
 <rect x="1281.700" y="837.600" width="3.700" height="5.600" rx="1.200"/>
 <path d="M1281.700 839.400h3.700M1283.500 843.200v9.600"/>
</g>
<!-- speaker -->
<g fill="none" stroke="#111" stroke-width="1.250" stroke-linejoin="round">
 <path d="M1294.500 842.600h2.800l3.300-3.100v11.200l-3.300-3.100h-2.800z"/>
 <path d="M1302.500 842.300a4 4 0 0 1 0 5.600M1304.800 840.300a7 7 0 0 1 0 9.600M1307.200 838.400a10 10 0 0 1 0 13.400" stroke-linecap="round"/>
</g>
<!-- bell -->
<path d="M1404 838c3.100 0 5 2.300 5 5.200v3.300l1.600 2.600c.2.400 0 .8-.5.800h-12.200c-.5 0-.7-.4-.5-.8l1.600-2.600v-3.300c0-2.900 1.900-5.200 5-5.200zM1401.700 851h4.600a2.300 2.300 0 0 1-4.600 0z" fill="#003E92"/>
</svg>
<div class="tx" style="left:42.500px;top:829.500px;color:#1b1b1b;letter-spacing:-.45px">USD/CAD</div>
<div class="tx" style="left:42.500px;top:845.700px;color:#C42B1C;letter-spacing:-.1px">-0.30%</div>
<div class="tx" style="left:529.800px;top:837.900px;font-size:13.200px;color:#5c5c5c;letter-spacing:-.1px">Search</div>
<div class="tx" style="right:42.800px;top:829.500px;color:#1b1b1b;text-align:right">9:33 AM</div>
<div class="tx" style="right:42.800px;top:845.100px;color:#1b1b1b;text-align:right;letter-spacing:.22px">12/11/2024</div>
</div>
</body></html>
